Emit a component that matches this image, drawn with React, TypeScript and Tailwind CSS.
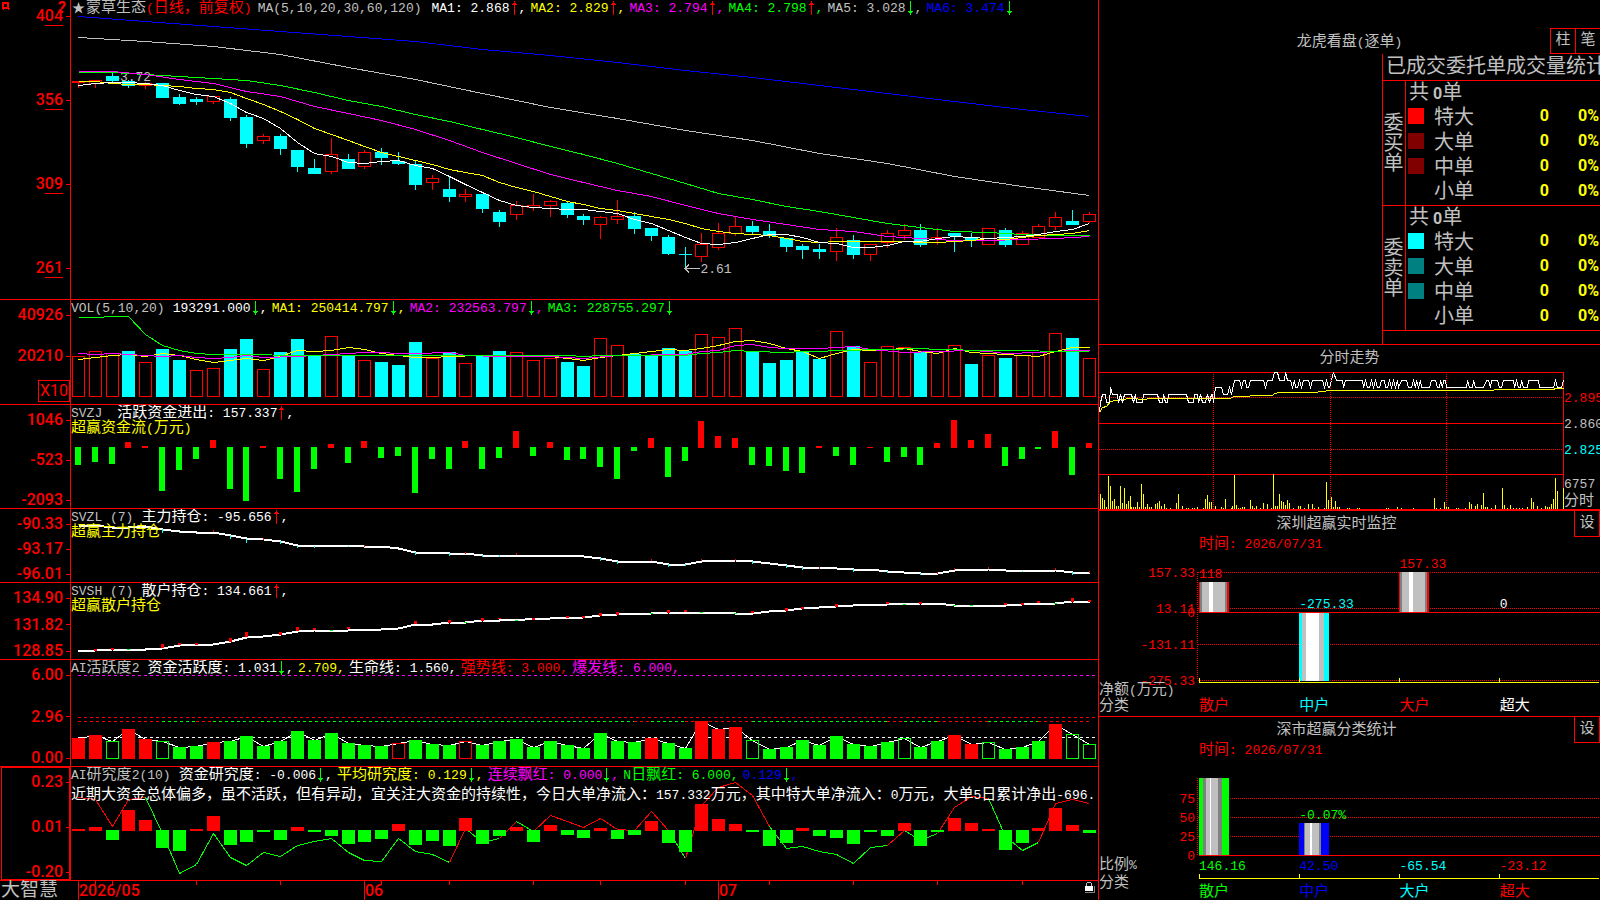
import type { FC, ReactNode } from "react";
import { clsx } from "clsx";

const RED = "#ff0000";
const GREEN = "#00ff00";
const CYAN = "#00ffff";
const YELLOW = "#ffff00";
const MAGENTA = "#ff00ff";
const BLUE = "#0000ff";
const GRAY = "#c0c0c0";
const DARK = "#808080";

/** Centre of the n-th daily bar, in the units of the chart view boxes. */
const barX = (i: number) => Math.round(77.9 + 16.85 * i);

/** "index,y index,y ..." to the points of a polyline. */
const toPoints = (data: string) =>
  data
    .split(" ")
    .map((pair) => pair.split(",").map(Number))
    .map(([i, y]) => `${barX(i)},${y}`)
    .join(" ");

/** Series sampled at a fixed step of bars. */
const series = (ys: number[], step = 1) => ys.map((y, n) => `${n * step},${y}`).join(" ");

// r = rising (hollow), c = falling (filled): high, body top, body bottom, low
const CANDLES: [string, number, number, number, number][] = [
  ["r", 81, 81, 82, 88], ["r", 80, 80, 83, 88], ["c", 73, 76, 81, 82], ["c", 80, 81, 86, 88], ["r", 82, 83, 85, 89],
  ["c", 83, 83, 98, 98], ["c", 94, 97, 104, 105], ["c", 97, 99, 102, 105], ["r", 96, 96, 101, 104], ["c", 97, 99, 118, 121],
  ["c", 115, 117, 144, 148], ["r", 134, 136, 140, 144], ["c", 134, 136, 149, 155], ["c", 150, 150, 167, 172], ["c", 159, 168, 174, 174],
  ["r", 138, 154, 171, 174], ["c", 154, 159, 169, 169], ["r", 150, 152, 166, 169], ["c", 148, 152, 158, 165], ["c", 152, 161, 164, 165],
  ["c", 161, 164, 185, 190], ["r", 175, 178, 182, 190], ["c", 176, 189, 197, 202], ["r", 189, 194, 196, 202], ["c", 194, 194, 209, 213],
  ["c", 210, 212, 222, 227], ["r", 201, 205, 214, 220], ["r", 194, 205, 207, 211], ["r", 200, 201, 205, 217], ["c", 201, 203, 215, 218],
  ["c", 214, 216, 220, 225], ["r", 216, 217, 224, 239], ["r", 200, 216, 219, 224], ["c", 212, 216, 229, 234], ["c", 228, 228, 236, 241],
  ["c", 235, 237, 254, 255], ["c", 247, 254, 255, 268], ["r", 233, 244, 256, 262], ["r", 223, 233, 247, 250], ["r", 217, 226, 233, 236],
  ["c", 221, 226, 232, 234], ["c", 224, 231, 236, 238], ["c", 238, 238, 247, 252], ["c", 244, 246, 250, 259], ["c", 244, 249, 252, 259],
  ["r", 228, 237, 251, 261], ["c", 235, 240, 255, 259], ["r", 244, 244, 254, 261], ["r", 230, 233, 242, 248], ["r", 224, 230, 235, 240],
  ["c", 224, 230, 245, 247], ["r", 228, 237, 239, 245], ["c", 233, 233, 236, 252], ["c", 233, 237, 240, 247], ["r", 228, 228, 244, 244],
  ["c", 228, 230, 245, 247], ["r", 231, 233, 244, 244], ["r", 224, 226, 237, 237], ["r", 212, 217, 226, 230], ["c", 210, 221, 225, 225],
  ["r", 212, 214, 221, 223],
];

const MA_LINES: [string, string][] = [
  [BLUE, series([16, 21, 26, 31, 36, 41, 49, 55, 62, 70, 77, 85, 93, 101, 109, 116], 4)],
  [GRAY, series([37, 41, 46, 54, 67, 79, 93, 107, 118, 130, 140, 153, 163, 176, 186, 195], 4)],
  [GREEN, series([72, 72, 74, 76, 78, 80, 85, 92, 100, 106, 114, 121, 129, 137, 146, 154, 163, 173, 183, 193, 199, 206, 211, 217, 223, 227, 231, 232, 234, 235, 235], 2)],
  [MAGENTA, series([71, 71, 74, 79, 83, 91, 96, 106, 113, 120, 129, 140, 152, 163, 174, 182, 190, 196, 205, 213, 219, 224, 229, 231, 236, 238, 240, 240, 239, 238, 236], 2)],
  [YELLOW, series([81, 81, 83, 84, 84, 85, 86, 88, 89, 92, 98, 104, 111, 119, 128, 134, 140, 146, 152, 156, 160, 164, 169, 172, 175, 182, 187, 191, 196, 201, 204, 208, 210, 213, 216, 219, 223, 228, 231, 233, 234, 235, 238, 241, 242, 241, 241, 241, 241, 241, 242, 242, 241, 240, 238, 239, 237, 235, 234, 233, 230])],
  ["#ffffff", series([85, 83, 82, 82, 83, 85, 90, 94, 96, 103, 112, 118, 128, 142, 153, 156, 162, 163, 161, 160, 165, 168, 176, 184, 192, 200, 205, 207, 208, 209, 209, 211, 213, 219, 223, 230, 237, 243, 244, 242, 238, 234, 234, 237, 242, 243, 247, 247, 245, 241, 241, 238, 236, 237, 238, 237, 236, 234, 231, 229, 223])],
];

// ten bars per chunk
const VOL_KIND = ["rrrcrccrrc", "crcccrcrcc", "crcrccrrrc", "crrccccrrr", "cccccrcrrr", "crrcrcrrrc", "r"].join("");
const VOL_TOP = [
  356, 351, 353, 351, 362, 349, 360, 370, 368, 349, 339, 369, 352, 339, 356, 336, 355, 360, 362, 365, 342, 358, 352, 363, 355, 351, 352, 360, 358, 362, 366,
  338, 345, 354, 355, 348, 351, 334, 337, 328, 351, 363, 360, 351, 359, 331, 346, 362, 346, 347, 352, 351, 345, 364, 355, 358, 355, 352, 333, 338, 358,
];
const VOL_LINES: [string, string][] = [
  [YELLOW, "0,359 1,357 2,355 3,354 4,356 5,353 6,355 7,359 8,362 9,360 10,358 11,360 12,356 13,350 14,351 15,350 16,347 17,349 18,353 19,355 20,357 21,357 22,356 24,355 27,355 28,356 29,358 30,360 31,357 32,355 33,353 34,351 35,349 36,350 37,348 38,345 39,341 40,340 41,343 42,348 43,351 44,358 45,353 46,349 47,350 48,349 49,348 50,351 51,353 52,348 53,352 54,353 55,354 56,355 57,356 58,351 59,347 60,347"],
  [MAGENTA, "0,353 1,354 2,353 4,355 5,356 6,355 7,357 8,358 9,357 10,355 11,357 13,356 15,354 17,352 20,353 22,352 23,355 25,356 28,356 30,358 32,355 36,354 37,351 38,350 39,345 40,344 41,347 42,348 44,348 45,347 46,346 47,349 49,352 51,351 53,350 54,351 55,353 57,352 59,350 60,350"],
  [GREEN, "0,317 1,317 2,316 3,316 4,334 5,345 6,350 7,353 8,354 10,354 13,355 29,355 30,356 31,355 36,355 37,353 38,352 39,350 40,351 42,352 43,351 44,351 45,350 48,349 50,348 51,349 54,350 60,351"],
];

const FLOW = [
  465, 462, 464, 442, 446, 491, 470, 459, 440, 489, 501, 446, 479, 492, 469, 444, 463, 441, 458, 456, 493, 459, 469, 441, 469, 458, 431, 456, 442, 460, 459,
  467, 479, 451, 438, 477, 461, 421, 436, 438, 465, 466, 471, 473, 446, 456, 465, 447, 462, 457, 465, 443, 420, 440, 434, 466, 459, 449, 431, 475, 443,
];

const MAIN_HOLD =
  "0,525 1,525 2,527 3,527 4,526 5,529 6,531 7,532 8,532 9,535 10,538 11,539 12,541 13,545 15,545 17,546 18,546 19,548 20,552 22,553 23,553 24,555 28,555 30,556 31,558 32,561 34,561 35,564 36,564 37,561 39,560 40,561 42,565 43,567 44,567 46,569 47,569 48,571 50,573 51,573 52,570 54,569 55,570 57,571 58,570 59,572 60,572";
const MAIN_MARKS =
  "5,529,4 6,532,1 9,535,4 10,539,4 12,541,3 13,546,2 14,546,2 16,546,1 20,552,3 22,553,3 24,555,2 25,555,2 31,558,3 32,561,3 35,564,3 36,564,2 40,561,3 42,565,3 43,567,3 46,569,3 48,571,2 50,573,2 56,571,1 59,572,3";
const MAIN_RED_MARKS = "8,530 11,538 17,545 23,552 26,553 34,559 37,559 39,559 44,567 51,572 52,568 54,567 58,568 60,571";

const RETAIL_HOLD =
  "0,651 1,650 2,649 4,649 5,648 6,645 8,644 9,641 10,637 11,636 12,634 13,631 14,630 16,630 18,629 19,628 20,624 21,624 22,622 23,622 24,620 25,620 28,618 30,617 31,615 32,614 34,613 35,612 38,612 39,613 40,613 41,611 42,610 43,608 45,606 46,605 48,604 50,603 51,603 52,605 54,605 55,605 56,604 58,603 59,601 60,601";
const RETAIL_MARKS =
  "1,649,2 2,648,2 5,644,4 6,643,2 7,643,2 9,638,4 10,632,5 12,632,3 13,627,4 14,628,2 16,627,2 20,621,3 22,620,3 24,618,3 25,618,1 27,618,2 29,616,2 30,616,2 31,613,3 32,612,3 35,610,3 36,610,2 40,611,2 42,608,3 43,607,2 45,604,3 48,602,2 50,602,2 55,603,2 56,603,2 57,601,2 59,598,4 60,600,2";
const RETAIL_GREEN_MARKS = "3,649 15,630 23,622 26,620 34,613 37,612 39,613 49,604 52,605 53,605 58,603";

// upper case = filled, lower case = hollow; ten bars per chunk
const ACTIVE_KIND = ["RRgRRgGGRG", "GGGGGGGGGr", "GGGrGGGGGG", "GGGGRGGRRR", "gGGGGGGGGg", "GGRRgGGGRg", "g"].join("");
const ACTIVE_TOP = [
  738, 735, 741, 729, 739, 741, 747, 746, 742, 741, 736, 746, 741, 731, 740, 733, 743, 745, 746, 743, 740, 744, 745, 741, 745, 741, 739, 747, 741, 745, 748,
  733, 741, 742, 738, 743, 748, 721, 729, 727, 740, 749, 747, 740, 745, 736, 744, 746, 742, 738, 747, 741, 735, 744, 742, 749, 747, 741, 724, 734, 744,
];
const ACTIVE_DASH: [string, number, number][] = [
  [RED, 0, 5], [GREEN, 5, 7], [RED, 7, 8], [GREEN, 8, 33], [RED, 33, 34], [GREEN, 34, 36], [RED, 36, 40], [GREEN, 40, 48],
  [RED, 48, 49], [GREEN, 49, 51], [RED, 51, 54], [GREEN, 54, 57], [RED, 57, 60],
];

const STUDY_BARS = [
  829, 827, 840, 810, 820, 848, 851, 829, 816, 845, 842, 832, 840, 827, 832, 836, 844, 842, 839, 824, 845, 841, 846, 818, 844, 836, 827, 842, 825, 835, 838,
  828, 839, 835, 821, 843, 852, 804, 819, 824, 832, 846, 843, 828, 836, 838, 844, 832, 836, 823, 846, 832, 818, 823, 829, 850, 843, 828, 808, 825, 833,
];
const STUDY_LINE = [
  797, 799, 826, 799, 797, 833, 873, 864, 833, 857, 865, 852, 856, 845, 841, 838, 852, 860, 861, 838, 851, 854, 862, 828, 842, 838, 821, 831, 815, 821, 827,
  818, 829, 830, 811, 830, 858, 805, 787, 782, 795, 826, 848, 846, 851, 854, 863, 847, 845, 830, 840, 833, 807, 796, 798, 836, 850, 842, 803, 799, 803,
];
const STUDY_PARTS: [string, number, number][] = [
  [RED, 0, 4], [GREEN, 4, 22], [RED, 22, 23], [GREEN, 23, 25], [RED, 25, 26], [GREEN, 26, 27], [RED, 27, 35], [GREEN, 35, 36],
  [RED, 36, 41], [GREEN, 41, 48], [RED, 48, 49], [GREEN, 49, 51], [RED, 51, 54], [GREEN, 54, 57], [RED, 57, 60],
];

const PRICE =
  "0,40 1,30 3,22 6,22 7,30 10,30 11,15 13,22 18,22 19,30 21,22 23,30 25,22 32,22 34,30 36,22 37,30 43,30 44,22 58,22 60,30 63,30 64,22 66,30 68,30 69,22 87,22 89,30 94,30 95,22 98,22 99,30 101,22 103,30 106,30 108,22 110,30 112,22 113,22 114,30 116,15 122,15 124,22 128,22 130,15 132,22 135,8 140,8 142,15 144,8 146,8 147,15 149,15 151,8 164,8 166,15 168,8 173,8 175,0 178,0 180,8 185,8 186,0 188,8 191,8 193,15 195,8 196,15 198,15 200,8 202,15 204,8 209,8 211,15 213,8 223,8 225,15 227,8 229,15 230,15 232,8 234,0 237,8 243,8 244,15 246,8 263,8 264,15 266,8 268,15 270,15 272,8 274,15 276,8 278,15 280,15 282,8 285,8 286,15 288,15 290,8 292,15 294,8 296,15 298,8 299,15 302,8 307,8 309,15 312,15 314,8 316,15 317,8 319,15 321,8 322,15 330,15 332,8 336,8 338,15 340,15 341,8 343,15 344,8 346,8 347,15 367,15 368,8 370,15 373,15 374,8 376,15 384,15 387,8 389,8 391,15 392,8 398,8 400,15 402,15 404,8 414,8 415,15 417,8 419,15 421,15 422,8 424,15 428,15 429,8 439,8 440,15 454,15 456,8 458,15 462,15 464,8";
const AVERAGE =
  "0,40 3,35 7,34 11,29 21,27 32,26 44,27 51,26 131,26 134,24 150,24 151,23 173,23 175,21 181,20 218,20 219,19 234,18 394,18 395,17 454,17 456,16 464,16";
const MINUTE_VOL =
  "1,15 3,11 5,9 7,2 9,33 11,23 13,8 15,10 17,3 19,3 21,23 23,6 25,21 27,5 29,8 31,13 32,2 34,2 36,2 38,7 40,2 42,25 44,15 46,2 48,5 50,2 52,2 56,5 58,6 60,8 62,3 65,5 67,1 71,1 77,6 79,15 83,3 87,1 89,1 93,1 95,1 98,2 104,1 106,10 108,14 110,7 112,7 116,3 122,2 124,1 126,10 132,1 133,3 135,34 137,4 139,1 141,1 143,2 145,2 151,9 153,3 155,1 157,3 161,1 164,6 168,5 172,1 174,35 176,3 178,3 180,15 182,8 184,7 186,4 188,9 190,6 194,1 199,3 201,3 205,1 209,5 213,5 215,1 219,2 225,1 227,27 229,9 232,12 234,2 236,8 238,2 240,2 248,1 250,1 258,1 260,1 287,1 289,1 298,2 302,1 314,1 335,11 337,1 341,1 345,7 347,2 349,2 357,1 359,1 366,1 370,7 372,5 376,3 378,5 382,4 384,16 386,2 388,2 392,1 396,4 403,21 405,4 408,1 411,4 414,1 417,1 420,1 423,1 428,2 432,11 434,7 438,3 442,1 446,3 448,2 450,2 452,5 454,10 456,31 458,18 464,21";

/** Latin cells are half as wide as a CJK cell, so the two scripts get their own sizes. */
const Txt: FC<{ children: string }> = ({ children }) => (
  <>
    {children.split(/([\u3000-\u9fff\uff00-\uffef]+)/).map((part, i) =>
      i % 2 ? (
        <span key={i} className="text-[15px]">
          {part}
        </span>
      ) : (
        part
      ),
    )}
  </>
);

const Arrow: FC<{ up?: boolean }> = ({ up }) => (
  <svg viewBox="0 0 9 16" className="inline-block h-4 w-[9px] shrink-0" shapeRendering="crispEdges" aria-hidden="true">
    {up ? (
      <path d="M4 1h1v14h-1zM3 3h3v1h-3zM2 4h5v1h-5z" fill={RED} />
    ) : (
      <path d="M4 1h1v14h-1zM3 12h3v1h-3zM2 11h5v1h-5z" fill={GREEN} />
    )}
  </svg>
);

type LegendItem = { text: string; color: string; arrow?: "up" | "down"; last?: boolean };

const Legend: FC<{ name?: ReactNode; items: LegendItem[]; gap?: string }> = ({ name, items, gap = "gap-2" }) => (
  <div className={clsx("relative flex h-[15px] leading-[18px]", gap)}>
    {name && <span className="text-[#c0c0c0]">{name}</span>}
    <span className="flex">
      {items.map((item) => (
        <span key={item.text} className={clsx("flex", item.color)}>
          <span>
            <Txt>{item.text}</Txt>
          </span>
          {item.arrow && <Arrow up={item.arrow === "up"} />}
          {!item.last && <span className="w-3">,</span>}
        </span>
      ))}
    </span>
  </div>
);

const Plot: FC<{ box: string; children: ReactNode }> = ({ box, children }) => (
  <svg viewBox={box} preserveAspectRatio="none" shapeRendering="crispEdges" className="absolute inset-0 h-full w-full" aria-hidden="true">
    {children}
  </svg>
);

const Line: FC<{ points: string; color: string; width?: number }> = ({ points, color, width = 1 }) => (
  <polyline points={points} fill="none" stroke={color} strokeWidth={width} transform="translate(0.5 0.5)" />
);

const Box: FC<{ i: number; top: number; bottom: number; color: string; hollow?: boolean }> = ({ i, top, bottom, color, hollow }) => (
  <rect
    x={barX(i) - (hollow ? 5.5 : 6)}
    y={hollow ? top + 0.5 : top}
    width={hollow ? 12 : 13}
    height={Math.max(1, bottom - top - (hollow ? 1 : 0))}
    fill={hollow ? "none" : color}
    stroke={hollow ? color : "none"}
  />
);

const Panel: FC<{ ticks: string[]; underlined?: boolean; framed?: boolean; axisExtra?: ReactNode; axis?: string; children: ReactNode }> = ({
  ticks,
  underlined,
  framed,
  axisExtra,
  axis = "justify-between pt-[7px]",
  children,
}) => (
  <section className="flex min-h-0 overflow-hidden border-b border-[#ff0000]">
    <div className="relative w-[71px] shrink-0 border-r border-[#ff0000]">
      {framed && <div className="absolute inset-y-0 left-px right-0 border border-[#ff0000]" />}
      <div className={clsx("flex h-full flex-col", axis)}>
        {ticks.map((tick) => (
          <div key={tick} className="relative flex h-4 items-center justify-end gap-[3px] font-['Roboto'] text-base leading-4 font-medium text-[#ff0000]">
            {tick}
            <span className="h-px w-1 bg-[#ff0000]" />
            {underlined && <span className="absolute right-[7px] -bottom-[2px] h-px w-[18px] bg-[#ff0000]" />}
          </div>
        ))}
        {axisExtra}
      </div>
    </div>
    <div className="relative min-w-0 flex-1 overflow-hidden">{children}</div>
  </section>
);

const PricePanel = () => (
  <Panel
    ticks={["404", "356", "309", "261"]}
    underlined
    axis="justify-between pt-2 pb-[23px]"
    axisExtra={
      <>
        <svg viewBox="0 0 9 9" className="absolute top-[2px] left-[2px] size-[9px]" shapeRendering="crispEdges" aria-hidden="true">
          <path d="M0 0h7v6h1v1h-1v1h-1v-1h-4v1h-1v-1h-1zM2 2v3h3v-3z" fill={RED} fillRule="evenodd" />
        </svg>
        <span className="absolute top-0 right-1 font-['Roboto'] text-base leading-4 font-bold text-[#ff0000]">?</span>
      </>
    }
  >
    <span className="absolute top-[70px] left-[4%] leading-4 text-[#c0c0c0]">←3.72</span>
    <Plot box="71 0 1027 299">
      {CANDLES.map(([kind, high, top, bottom, low], i) => {
        const color = kind === "r" ? RED : CYAN;
        return (
          <g key={i}>
            <rect x={barX(i)} y={high} width="1" height={top - high} fill={color} />
            <rect x={barX(i)} y={bottom} width="1" height={low - bottom} fill={color} />
            <Box i={i} top={top} bottom={bottom + (kind === "r" ? 1 : 0)} color={color} hollow={kind === "r"} />
          </g>
        );
      })}
      {MA_LINES.map(([color, data]) => (
        <Line key={color} color={color} points={toPoints(data)} />
      ))}
      <path d="M685 268.500h15M689 264.500l-4 4l4 4" stroke={GRAY} fill="none" />
    </Plot>
    <span className="absolute top-[262px] left-[61%] pl-[3px] leading-4 text-[#c0c0c0]">2.61</span>
    <Legend
      gap="gap-[10px]"
      name={
        <span className="flex">
          <span className="w-[15px] text-center">★</span>
          <h1>
            <Txt>蒙草生态</Txt>
          </h1>
          <span className="text-[#ff0000]">
            <Txt>(日线，前复权)</Txt>
          </span>
          <span className="ml-[6px]">MA(5,10,20,30,60,120)</span>
        </span>
      }
      items={[
        { text: "MA1: 2.868", color: "text-white", arrow: "up" },
        { text: "MA2: 2.829", color: "text-[#ffff00]", arrow: "up" },
        { text: "MA3: 2.794", color: "text-[#ff00ff]", arrow: "up" },
        { text: "MA4: 2.798", color: "text-[#00ff00]", arrow: "up" },
        { text: "MA5: 3.028", color: "text-[#c0c0c0]", arrow: "down" },
        { text: "MA6: 3.474", color: "text-[#0000ff]", arrow: "down", last: true },
      ]}
    />
  </Panel>
);

const VolumePanel = () => (
  <Panel
    ticks={["40926", "20210"]}
    axis="gap-[25px] pt-[7px]"
    axisExtra={
      <span className="-mt-[9px] flex h-[22px] w-8 items-center justify-center self-end border border-[#ff0000] font-['Roboto'] text-base leading-4 text-[#ff0000]">
        X10
      </span>
    }
  >
    <Plot box="71 300 1027 104">
      {VOL_TOP.map((top, i) => (
        <Box key={i} i={i} top={top} bottom={397} color={VOL_KIND[i] === "r" ? RED : CYAN} hollow={VOL_KIND[i] === "r"} />
      ))}
      {VOL_LINES.map(([color, data]) => (
        <Line key={color} color={color} points={toPoints(data)} />
      ))}
    </Plot>
    <Legend
      name="VOL(5,10,20)"
      items={[
        { text: "193291.000", color: "text-white", arrow: "down" },
        { text: "MA1: 250414.797", color: "text-[#ffff00]", arrow: "down" },
        { text: "MA2: 232563.797", color: "text-[#ff00ff]", arrow: "down" },
        { text: "MA3: 228755.297", color: "text-[#00ff00]", arrow: "down", last: true },
      ]}
    />
  </Panel>
);

const SubTitle: FC<{ children: string }> = ({ children }) => (
  <h2 className="relative h-[15px] leading-[18px] text-[#ffff00]">
    <Txt>{children}</Txt>
  </h2>
);

const FlowPanel = () => (
  <Panel ticks={["1046", "-523", "-2093"]}>
    <Plot box="71 405 1027 103">
      {FLOW.map((y, i) => (
        <rect key={i} x={barX(i) - 3} y={Math.min(y, 447)} width="6" height={y < 448 ? 448 - y : y - 447} fill={y < 448 ? RED : GREEN} />
      ))}
    </Plot>
    <Legend name="SVZJ" gap="gap-[15px]" items={[{ text: "活跃资金进出: 157.337", color: "text-white", arrow: "up" }]} />
    <SubTitle>超赢资金流(万元)</SubTitle>
  </Panel>
);

const MainHoldPanel = () => (
  <Panel ticks={["-90.33", "-93.17", "-96.01"]}>
    <Plot box="71 509 1027 73">
      <Line points={toPoints(MAIN_HOLD)} color="#ffffff" width={2} />
      {MAIN_MARKS.split(" ").map((mark) => {
        const [i, y, h] = mark.split(",").map(Number);
        return <rect key={i} x={barX(i)} y={y} width="1" height={h} fill={CYAN} />;
      })}
      {MAIN_RED_MARKS.split(" ").map((mark) => {
        const [i, y] = mark.split(",").map(Number);
        return <rect key={i} x={barX(i)} y={y} width="1" height="2" fill={RED} />;
      })}
    </Plot>
    <Legend name="SVZL (7)" items={[{ text: "主力持仓: -95.656", color: "text-white", arrow: "up" }]} />
    <SubTitle>超赢主力持仓</SubTitle>
  </Panel>
);

const RetailHoldPanel = () => (
  <Panel ticks={["134.90", "131.82", "128.85"]}>
    <Plot box="71 583 1027 76">
      <Line points={toPoints(RETAIL_HOLD)} color="#ffffff" width={2} />
      {RETAIL_MARKS.split(" ").map((mark) => {
        const [i, y, h] = mark.split(",").map(Number);
        return <rect key={i} x={barX(i) - 1} y={y} width="3" height={h} fill={RED} />;
      })}
      {RETAIL_GREEN_MARKS.split(" ").map((mark) => {
        const [i, y] = mark.split(",").map(Number);
        return <rect key={i} x={barX(i) - 1} y={y} width="3" height="1" fill={GREEN} />;
      })}
    </Plot>
    <Legend name="SVSH (7)" items={[{ text: "散户持仓: 134.661", color: "text-white", arrow: "up" }]} />
    <SubTitle>超赢散户持仓</SubTitle>
  </Panel>
);

const ActivePanel = () => (
  <Panel ticks={["6.00", "2.96", "0.00"]}>
    <Plot box="71 660 1027 106">
      <path d="M78 675.500H1096" stroke={MAGENTA} strokeDasharray="3 3" />
      <path d="M78 717.500H1096" stroke={RED} strokeDasharray="3 3" />
      <path d="M78 737.500H1096" stroke="#ffffff" strokeDasharray="3 3" />
      {ACTIVE_DASH.map(([color, from, to]) => (
        <path key={from} d={`M${barX(from)} 721.500H${barX(to)}`} stroke={color} strokeDasharray="3 3" />
      ))}
      <Line points={toPoints(series(ACTIVE_TOP))} color="#ffffff" />
      {ACTIVE_TOP.map((top, i) => {
        const kind = ACTIVE_KIND.charAt(i);
        return <Box key={i} i={i} top={top} bottom={759} color={kind.toLowerCase() === "r" ? RED : GREEN} hollow={kind === kind.toLowerCase()} />;
      })}
    </Plot>
    <Legend
      name={<Txt>AI活跃度2</Txt>}
      items={[
        { text: "资金活跃度: 1.031", color: "text-white", arrow: "down" },
        { text: "2.709", color: "text-[#ffff00]" },
        { text: "生命线: 1.560", color: "text-white" },
        { text: "强势线: 3.000", color: "text-[#ff0000]" },
        { text: "爆发线: 6.000", color: "text-[#ff00ff]" },
      ]}
    />
  </Panel>
);

const StudyPanel = () => (
  <Panel ticks={["0.23", "0.01", "-0.20"]} framed>
    <Plot box="71 767 1027 113">
      {STUDY_PARTS.map(([color, from, to]) => (
        <Line
          key={from}
          color={color}
          points={STUDY_LINE.slice(from, to + 1)
            .map((y, n) => `${barX(from + n)},${y}`)
            .join(" ")}
        />
      ))}
      {STUDY_BARS.map((y, i) => (
        <Box key={i} i={i} top={Math.min(y, 830)} bottom={Math.max(y, 831)} color={y < 831 ? RED : GREEN} />
      ))}
    </Plot>
    <Legend
      name={<Txt>AI研究度2(10)</Txt>}
      items={[
        { text: "资金研究度: -0.006", color: "text-white", arrow: "down" },
        { text: "平均研究度: 0.129", color: "text-[#ffff00]", arrow: "down" },
        { text: "连续飘红: 0.000", color: "text-[#ff00ff]", arrow: "down" },
        { text: "N日飘红: 6.000", color: "text-[#00ff00]" },
        { text: "0.129", color: "text-[#0000ff]", arrow: "down" },
      ]}
    />
    <p className="relative mt-1 leading-5 text-white">
      <Txt>近期大资金总体偏多，虽不活跃，但有异动，宜关注大资金的持续性，今日大单净流入：157.332万元，其中特大单净流入：0万元，大单5日累计净出-696.</Txt>
    </p>
  </Panel>
);

const MONTHS = [
  { bar: 0, label: "2026/05" },
  { bar: 17, label: "06" },
  { bar: 38, label: "07" },
];

const TimeAxis = () => (
  <footer className="flex min-h-0">
    <div className="w-[71px] shrink-0 pl-px text-[19px] leading-5 text-[#c0c0c0]">大智慧</div>
    <div className="relative min-w-0 flex-1">
      <Plot box="71 881 1027 19">
        {MONTHS.map(({ bar }) => (
          <rect key={bar} x={barX(bar)} y="881" width="1" height="19" fill={RED} />
        ))}
        {[1, 2, 7, 12, 18, 22, 27, 31, 36, 41, 46, 51, 56].map((i) => (
          <rect key={i} x={barX(i)} y="881" width="1" height="4" fill={RED} />
        ))}
      </Plot>
      {MONTHS.map(({ bar, label }) => (
        <span
          key={bar}
          className="absolute top-0 pl-px font-['Roboto'] text-base leading-[19px] font-medium text-[#ff0000]"
          style={{ left: `${((barX(bar) - 71) / 1027) * 100}%` }}
        >
          {label}
        </span>
      ))}
      <svg viewBox="0 0 10 11" className="absolute top-[1px] right-[3px] h-[11px] w-[10px]" shapeRendering="crispEdges" aria-hidden="true">
        <path d="M2 0h4v1h1v3h-1v-3h-4v3h-1v-3h1z" fill={GRAY} />
        <path d="M0 4h8v5h-8z" fill="#ffffff" />
        <path d="M9 4h1v7h-10v-1h9z" fill={DARK} />
      </svg>
    </div>
  </footer>
);

const PaneButton: FC<{ children: string; className?: string }> = ({ children, className }) => (
  <button
    type="button"
    className={clsx("h-[26px] shrink-0 cursor-pointer border border-[#ff0000] text-[15px] leading-[18px] text-[#c0c0c0]", className)}
  >
    {children}
  </button>
);

const ORDERS = [
  {
    side: "委买单",
    rows: [
      ["特大", "bg-[#ff0000]"],
      ["大单", "bg-[#800000]"],
      ["中单", "bg-[#800000]"],
      ["小单", "bg-black"],
    ],
  },
  {
    side: "委卖单",
    rows: [
      ["特大", "bg-[#00ffff]"],
      ["大单", "bg-[#008080]"],
      ["中单", "bg-[#008080]"],
      ["小单", "bg-black"],
    ],
  },
];

const OrderPane = () => (
  <section className="flex min-h-0 flex-col overflow-hidden border-b border-[#ff0000]">
    <header className="relative flex h-[54px] shrink-0 items-end justify-end">
      <h2 className="absolute inset-x-0 bottom-[3px] text-center leading-4 text-[#c0c0c0]">
        <Txt>龙虎看盘(逐单)</Txt>
      </h2>
      <PaneButton className="w-[25px] border-r-0">柱</PaneButton>
      <PaneButton className="w-[25px] border-r-0">笔</PaneButton>
    </header>
    <div className="w-[218px] flex-1 self-end overflow-hidden border-l border-[#ff0000] text-xl text-[#c0c0c0]">
      <h3 id="orders-title" className="h-[27px] overflow-hidden border-b border-[#ff0000] pl-[3px] leading-7 whitespace-nowrap">
        已成交委托单成交量统计
      </h3>
      <table aria-labelledby="orders-title" className="w-full table-fixed border-separate border-spacing-0 leading-5">
        <colgroup>
          <col className="w-[23px]" />
          <col className="w-[26px]" />
          <col className="w-[68px]" />
          <col className="w-[50px]" />
          <col />
        </colgroup>
        {ORDERS.map(({ side, rows }) => (
          <tbody key={side}>
            <tr className="h-[25px]">
              <th scope="rowgroup" rowSpan={5} className="border-r border-b border-[#ff0000] p-0 pt-[3px] pr-px align-middle font-normal break-all">
                {side}
              </th>
              <td colSpan={4} className="p-0 pl-[3px]">
                共<b className="font-['Roboto'] text-base leading-5 font-bold">{" 0"}</b>单
              </td>
            </tr>
            {rows.map(([name, color], i) => {
              const line = i === 3 && "border-b border-[#ff0000]";
              const amount = "p-0 pr-px text-right align-top font-['Roboto'] text-base leading-5 font-bold text-[#ffff00]";
              return (
                <tr key={name} className="h-[25px]">
                  <td className={clsx("p-0 pt-[2px] pl-[2px] align-top", line)}>
                    <div className={clsx("size-4", color)} />
                  </td>
                  <th scope="row" className={clsx("p-0 pl-[2px] text-left font-normal", line)}>
                    {name}
                  </th>
                  <td className={clsx(amount, line)}>0</td>
                  <td className={clsx(amount, line)}>0%</td>
                </tr>
              );
            })}
          </tbody>
        ))}
      </table>
    </div>
  </section>
);

const MinutePane = () => (
  <section className="flex min-h-0 flex-col overflow-hidden border-b-2 border-[#ff0000]">
    <h2 className="h-[27px] shrink-0 pt-[5px] text-center text-[15px] leading-[18px] text-[#c0c0c0]">分时走势</h2>
    <div className="flex min-h-0 flex-1">
      <div className="relative min-w-0 flex-1">
        <Plot box="0 0 465 137">
          <path d="M0 .5H464.500V137M0 51.500H464M0 102.500H464" stroke={RED} fill="none" />
          <path d="M0 25.500H464M0 77.500H464" stroke={RED} strokeDasharray="1 1" />
          <path d="M114.500 0V137M231.500 0V137M347.500 0V137" stroke={RED} strokeDasharray="1 1" />
          <Line points={AVERAGE} color={YELLOW} />
          <Line points={PRICE} color="#ffffff" />
          {MINUTE_VOL.split(" ").map((bar) => {
            const [x, h] = bar.split(",").map(Number);
            return <rect key={x} x={x} y={137 - h} width="1" height={h} fill={YELLOW} />;
          })}
        </Plot>
      </div>
      <div className="flex w-9 shrink-0 flex-col overflow-hidden pt-[19px] leading-4 whitespace-nowrap text-[#c0c0c0]">
        <span className="mb-[10px] text-[#ff0000]">2.895</span>
        <span className="mb-[10px]">2.860</span>
        <span className="text-[#00ffff]">2.825</span>
        <span className="mt-[18px]">6757</span>
        <span className="text-[15px] leading-[18px]">分时</span>
      </div>
    </div>
  </section>
);

/** Cylinder-like column: [colour, width] stripes from left to right, 30 units in all. */
const RED_STRIPES: [string, number][] = [[RED, 1], [DARK, 2], [GRAY, 7], ["#ffffff", 4], [GRAY, 12], [DARK, 2], [RED, 2]];
const CYAN_STRIPES: [string, number][] = [[CYAN, 3], [GRAY, 4], ["#ffffff", 13], [GRAY, 5], [CYAN, 5]];
const GREEN_STRIPES: [string, number][] = [[GREEN, 4], [DARK, 3], [GRAY, 4], ["#ffffff", 1], [GRAY, 7], [DARK, 4], [GREEN, 7]];
const BLUE_STRIPES: [string, number][] = [[BLUE, 5], [DARK, 1], [GRAY, 5], ["#ffffff", 2], [GRAY, 7], [DARK, 2], [BLUE, 8]];

const Column: FC<{ x: number; top: number; bottom: number; stripes: [string, number][] }> = ({ x, top, bottom, stripes }) => (
  <>
    {stripes.map(([color, width], i) => {
      const left = stripes.slice(0, i).reduce((sum, [, w]) => sum + w, x);
      return <rect key={i} x={left} y={top} width={width} height={bottom - top} fill={color} />;
    })}
  </>
);

const PaneHeader: FC<{ title: string }> = ({ title }) => (
  <>
    <header className="flex h-[25px] shrink-0">
      <h2 className="flex-1 text-center text-[15px] leading-7 text-[#c0c0c0]">{title}</h2>
      <PaneButton className="w-[26px] border-t-0">设</PaneButton>
    </header>
    <p className="h-4 shrink-0 pl-[100px] leading-[18px] text-[#ff0000]">
      <Txt>时间: 2026/07/31</Txt>
    </p>
  </>
);

type Mark = { text: string; at: number };

const AxisLabels: FC<{ labels: Mark[] }> = ({ labels }) => (
  <div className="relative min-h-0 flex-1">
    {labels.map(({ text, at }) => (
      <span key={text} className="absolute right-[2px] -mt-2 leading-[18px] text-[#ff0000]" style={{ top: at }}>
        {text}
      </span>
    ))}
  </div>
);

const Categories: FC<{ labels: [string, string][] }> = ({ labels }) => (
  <div className="relative grid h-4 grid-cols-4 pl-[2px] leading-[19px]">
    {labels.map(([text, color]) => (
      <span key={text} className={color}>
        <Txt>{text}</Txt>
      </span>
    ))}
  </div>
);

const MonitorPane = () => (
  <section className="flex min-h-0 flex-col overflow-hidden border-b border-[#ff0000]">
    <PaneHeader title="深圳超赢实时监控" />
    <div className="flex min-h-0 flex-1 pb-[3px]">
      <div className="flex w-[98px] shrink-0 flex-col">
        <AxisLabels
          labels={[
            { text: "157.33", at: 21 },
            { text: "13.11", at: 57 },
            { text: "0", at: 61 },
            { text: "-131.11", at: 93 },
            { text: "-275.33", at: 129 },
          ]}
        />
        <span className="relative h-4 leading-[19px] text-[#c0c0c0]">
          <Txt>净额(万元)</Txt>
        </span>
        <span className="h-4 text-[15px] leading-[19px] text-[#c0c0c0]">分类</span>
      </div>
      <div className="relative flex min-w-0 flex-1 flex-col justify-end">
        <Plot box="1197 552 403 161">
          <path d="M1197.500 572V680" stroke={RED} strokeDasharray="1 1" />
          <path d="M1198 572.500H1600M1198 608.500H1600M1198 644.500H1600M1198 680.500H1600" stroke={RED} strokeDasharray="1 1" />
          <Column x={1199} top={582} bottom={612} stripes={RED_STRIPES} />
          <Column x={1399} top={572} bottom={612} stripes={RED_STRIPES} />
          <Column x={1299} top={613} bottom={681} stripes={CYAN_STRIPES} />
          <path d="M1199 612.500H1600" stroke={RED} />
          <path d="M1199 682.500H1599M1199.500 678V682M1299.500 678V682M1399.500 678V682M1499.500 678V682" stroke={YELLOW} />
        </Plot>
        <div className="absolute inset-x-0 top-px grid grid-cols-4 pl-[2px] leading-4">
          <span className="mt-[14px] text-[#ff0000]">118</span>
          <span className="mt-11 text-[#00ffff]">-275.33</span>
          <span className="mt-1 text-[#ff0000]">157.33</span>
          <span className="mt-11 text-white">0</span>
        </div>
        <Categories
          labels={[
            ["散户", "text-[#ff0000]"],
            ["中户", "text-[#00ffff]"],
            ["大户", "text-[#ff0000]"],
            ["超大", "text-white"],
          ]}
        />
      </div>
    </div>
  </section>
);

const StatsPane = () => (
  <section className="flex min-h-0 flex-col">
    <PaneHeader title="深市超赢分类统计" />
    <div className="flex min-h-0 flex-1 pb-px">
      <div className="flex w-[98px] shrink-0 flex-col pb-[9px]">
        <AxisLabels
          labels={[
            { text: "75", at: 41 },
            { text: "50", at: 60 },
            { text: "25", at: 79 },
            { text: "0", at: 98 },
          ]}
        />
        <span className="mb-[2px] h-4 leading-[19px] text-[#c0c0c0]">
          <Txt>比例%</Txt>
        </span>
        <span className="h-4 text-[15px] leading-[19px] text-[#c0c0c0]">分类</span>
      </div>
      <div className="relative flex min-w-0 flex-1 flex-col justify-end gap-[10px]">
        <Plot box="1197 758 403 141">
          <path d="M1197.500 778V855" stroke={RED} strokeDasharray="1 1" />
          <path d="M1198 798.500H1600M1198 817.500H1600M1198 836.500H1600" stroke={RED} strokeDasharray="1 1" />
          <Column x={1199} top={778} bottom={855} stripes={GREEN_STRIPES} />
          <Column x={1299} top={823} bottom={855} stripes={BLUE_STRIPES} />
          <path d="M1199 855.500H1600" stroke={RED} />
          <path d="M1199 878.500H1599M1199.500 874V878M1299.500 874V878M1399.500 874V878M1499.500 874V878" stroke={YELLOW} />
        </Plot>
        <div className="absolute inset-x-0 top-[50px] grid grid-cols-4 pl-[2px] leading-4">
          <span className="col-start-2 text-[#00ff00]">-0.07%</span>
        </div>
        <Categories
          labels={[
            ["146.16", "text-[#00ff00]"],
            ["42.50", "text-[#0000ff]"],
            ["-65.54", "text-[#00ffff]"],
            ["-23.12", "text-[#ff0000]"],
          ]}
        />
        <Categories
          labels={[
            ["散户", "text-[#00ff00]"],
            ["中户", "text-[#0000ff]"],
            ["大户", "text-[#00ffff]"],
            ["超大", "text-[#ff0000]"],
          ]}
        />
      </div>
    </div>
  </section>
);

export default function App() {
  return (
    <div className="flex h-screen overflow-hidden bg-black font-['Liberation_Mono','Noto_Sans_CJK_SC',monospace] text-[13px] leading-4">
      <main className="grid min-w-0 flex-1 grid-rows-[300fr_105fr_104fr_74fr_77fr_107fr_114fr_19fr] border-r border-[#ff0000] whitespace-nowrap">
        <PricePanel />
        <VolumePanel />
        <FlowPanel />
        <MainHoldPanel />
        <RetailHoldPanel />
        <ActivePanel />
        <StudyPanel />
        <TimeAxis />
      </main>
      <aside className="grid w-[501px] shrink-0 grid-rows-[345fr_166fr_206fr_183fr]">
        <OrderPane />
        <MinutePane />
        <MonitorPane />
        <StatsPane />
      </aside>
    </div>
  );
}
